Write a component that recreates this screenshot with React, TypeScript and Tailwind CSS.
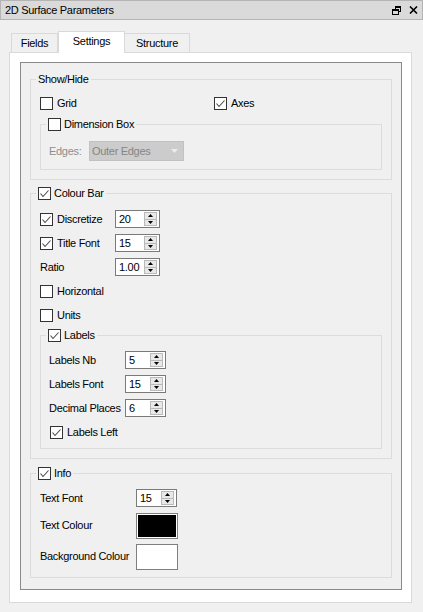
import React from "react";

function CheckBox({ checked }: { checked?: boolean }) {
  return (
    <span className="flex h-[13px] w-[13px] shrink-0 items-center justify-center border border-[#333333] bg-white">
      {checked && (
        <svg width="11" height="11" viewBox="0 0 11 11">
          <polyline points="1.5,5.5 4,8.5 9.5,2.5" fill="none" stroke="#4a4a4a" strokeWidth="1.1" />
        </svg>
      )}
    </span>
  );
}

function Check({ label, checked, gap = "gap-[4px]" }: { label: string; checked?: boolean; gap?: string }) {
  return (
    <span className={`flex items-center ${gap}`}>
      <CheckBox checked={checked} />
      <span className="leading-[13px]">{label}</span>
    </span>
  );
}

function SpinBox({ value, width }: { value: string; width: string }) {
  return (
    <div className={`flex h-[18px] ${width} items-center border border-[#7a7a7a] bg-white`}>
      <span className="flex-1 pl-[3px] leading-[16px]">{value}</span>
      <div className="mr-[2px] flex h-[14px] w-[13px] flex-col border border-[#b9b9b9] bg-[#e8e8e8]">
        <div className="flex flex-1 items-center justify-center border-b border-[#b9b9b9]">
          <svg width="5" height="3" viewBox="0 0 5 3"><polygon points="0,3 5,3 2.5,0" fill="#000" /></svg>
        </div>
        <div className="flex flex-1 items-center justify-center">
          <svg width="5" height="3" viewBox="0 0 5 3"><polygon points="0,0 5,0 2.5,3" fill="#000" /></svg>
        </div>
      </div>
    </div>
  );
}

function Group({ title, className = "", children }: { title: React.ReactNode; className?: string; children: React.ReactNode }) {
  return (
    <div className={`relative border border-[#dcdcdc] ${className}`}>
      <div className="absolute -top-[7px] left-[5px] flex h-[13px] items-center bg-[#f0f0f0] px-[2px]">{title}</div>
      {children}
    </div>
  );
}

export default function App() {
  return (
    <div className="h-[612px] w-[423px] bg-[#f0f0f0] font-['Liberation_Sans',Arial,sans-serif] text-[11px] tracking-[-0.3px] text-black">
      <div className="flex h-[20px] items-center justify-between border border-[#b4b4b4] bg-[#dadada] pl-[4px] pr-[4px]">
        <span>2D Surface Parameters</span>
        <div className="flex items-center gap-[8px]">
          <svg width="9" height="9" viewBox="0 0 9 9" shapeRendering="crispEdges">
            <rect x="3" y="0.5" width="5.5" height="5" fill="none" stroke="#000" />
            <rect x="3" y="0" width="6" height="2" fill="#000" />
            <rect x="0.5" y="3.5" width="5.5" height="5" fill="#dadada" stroke="#000" />
            <rect x="0" y="3" width="6" height="2" fill="#000" />
          </svg>
          <svg width="9" height="8" viewBox="0 0 9 8">
            <path d="M1 0.5 L8 7.5 M8 0.5 L1 7.5" stroke="#000" strokeWidth="1.6" />
          </svg>
        </div>
      </div>

      <div className="pl-[9px] pt-[11px]">
        <div className="flex h-[21px] items-end pl-[2px]">
          <div className="flex h-[19px] w-[47px] items-center justify-center border border-b-0 border-[#d9d9d9] bg-[#f0f0f0]">Fields</div>
          <div className="relative z-10 -mb-px flex h-[22px] w-[67px] items-center justify-center border border-b-0 border-[#d9d9d9] bg-white pb-[2px]">Settings</div>
          <div className="flex h-[19px] w-[65px] items-center justify-center border border-b-0 border-l-0 border-[#d9d9d9] bg-[#f0f0f0]">Structure</div>
        </div>

        <div className="h-[551px] w-[403px] border border-[#d9d9d9] bg-white pb-[12px] pl-[10px] pr-[9px] pt-[9px]">
          <div className="h-[528px] w-[382px] border border-[#8a8a8a] bg-[#f0f0f0] px-[9px] pt-[16px]">
            <Group title={<span>Show/Hide</span>} className="pb-[9px] pl-[9px] pr-[9px] pt-[17px]">
              <div className="flex h-[13px] items-center">
                <div className="w-[174px]"><Check label="Grid" /></div>
                <Check label="Axes" checked />
              </div>
              <Group title={<Check label="Dimension Box" gap="gap-[3px]" />} className="mt-[14px] pb-[8px] pl-[8px] pt-[16px]">
                <div className="flex h-[20px] items-center">
                  <span className="w-[40px] text-[#8d8d8d]">Edges:</span>
                  <div className="flex h-[20px] w-[95px] items-center justify-between border border-[#c2c2c2] bg-[#cccccc] pl-[2px] pr-[5px] text-[#858585]">
                    <span>Outer Edges</span>
                    <svg width="7" height="4" viewBox="0 0 7 4"><polygon points="0,0 7,0 3.5,4" fill="#ececec" /></svg>
                  </div>
                </div>
              </Group>
            </Group>

            <Group title={<Check label="Colour Bar" checked gap="gap-[3px]" />} className="mt-[13px] pb-[9px] pl-[9px] pr-[9px] pt-[13px]">
              <div className="flex h-[24px] items-center">
                <div className="w-[75px]"><Check label="Discretize" checked /></div>
                <SpinBox value="20" width="w-[45px]" />
              </div>
              <div className="flex h-[24px] items-center">
                <div className="w-[75px]"><Check label="Title Font" checked /></div>
                <SpinBox value="15" width="w-[45px]" />
              </div>
              <div className="flex h-[24px] items-center">
                <span className="w-[75px]">Ratio</span>
                <SpinBox value="1.00" width="w-[45px]" />
              </div>
              <div className="flex h-[24px] items-center"><Check label="Horizontal" /></div>
              <div className="flex h-[24px] items-center"><Check label="Units" /></div>

              <Group title={<Check label="Labels" checked gap="gap-[3px]" />} className="mt-[8px] pb-[4px] pl-[8px] pt-[12px]">
                <div className="flex h-[24px] items-center">
                  <span className="w-[76px]">Labels Nb</span>
                  <SpinBox value="5" width="w-[41px]" />
                </div>
                <div className="flex h-[24px] items-center">
                  <span className="w-[76px]">Labels Font</span>
                  <SpinBox value="15" width="w-[41px]" />
                </div>
                <div className="flex h-[24px] items-center">
                  <span className="w-[76px]">Decimal Places</span>
                  <SpinBox value="6" width="w-[41px]" />
                </div>
                <div className="flex h-[24px] items-center pl-[1px]"><Check label="Labels Left" checked /></div>
              </Group>
            </Group>

            <Group title={<Check label="Info" checked gap="gap-[3px]" />} className="mt-[14px] pb-[5px] pl-[9px] pt-[12px]">
              <div className="flex h-[24px] items-center">
                <span className="w-[96px]">Text Font</span>
                <SpinBox value="15" width="w-[41px]" />
              </div>
              <div className="flex h-[31px] items-center">
                <span className="w-[96px]">Text Colour</span>
                <div className="h-[26px] w-[42px] border border-[#7f7f7f] bg-white p-[1px]">
                  <div className="h-full w-full bg-black" />
                </div>
              </div>
              <div className="flex h-[31px] items-center">
                <span className="w-[96px]">Background Colour</span>
                <div className="h-[26px] w-[42px] border border-[#7f7f7f] bg-white" />
              </div>
            </Group>
          </div>
        </div>
      </div>
    </div>
  );
}
